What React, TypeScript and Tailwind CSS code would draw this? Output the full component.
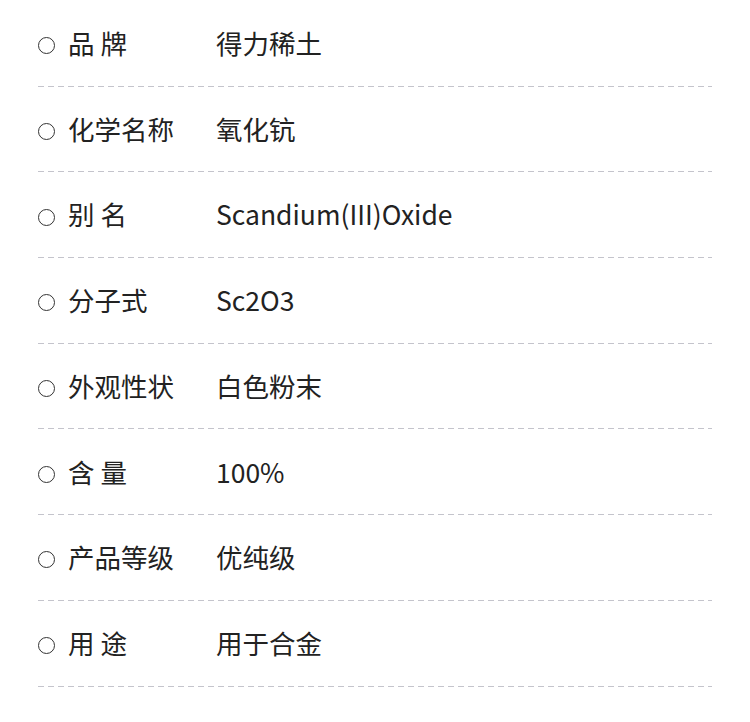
const rows = [
  { label: "品 牌", value: "得力稀土" },
  { label: "化学名称", value: "氧化钪" },
  { label: "别 名", value: "Scandium(III)Oxide" },
  { label: "分子式", value: "Sc2O3" },
  { label: "外观性状", value: "白色粉末" },
  { label: "含 量", value: "100%" },
  { label: "产品等级", value: "优纯级" },
  { label: "用 途", value: "用于合金" },
];

export default function App() {
  return (
    <main className="w-[750px] h-[722px] bg-white px-[38px] pt-px font-['Noto_Sans_CJK_SC',sans-serif] text-[#222]">
      {rows.map((row) => (
        <div key={row.label} className="h-[85.7px] flex flex-col">
          <div className="flex-1 flex items-center text-[26.5px] leading-none">
            <div className="w-[178px] flex items-center">
              <span className="w-[17px] h-[17px] mt-[5px] rounded-full border-[1.5px] border-[#333] mr-[13px]" />
              <span>{row.label}</span>
            </div>
            <span>{row.value}</span>
          </div>
          <div className="h-px w-[674px] bg-[linear-gradient(to_right,#c4c4cc_60%,transparent_0)] bg-[length:10px_1px]" />
        </div>
      ))}
    </main>
  );
}
